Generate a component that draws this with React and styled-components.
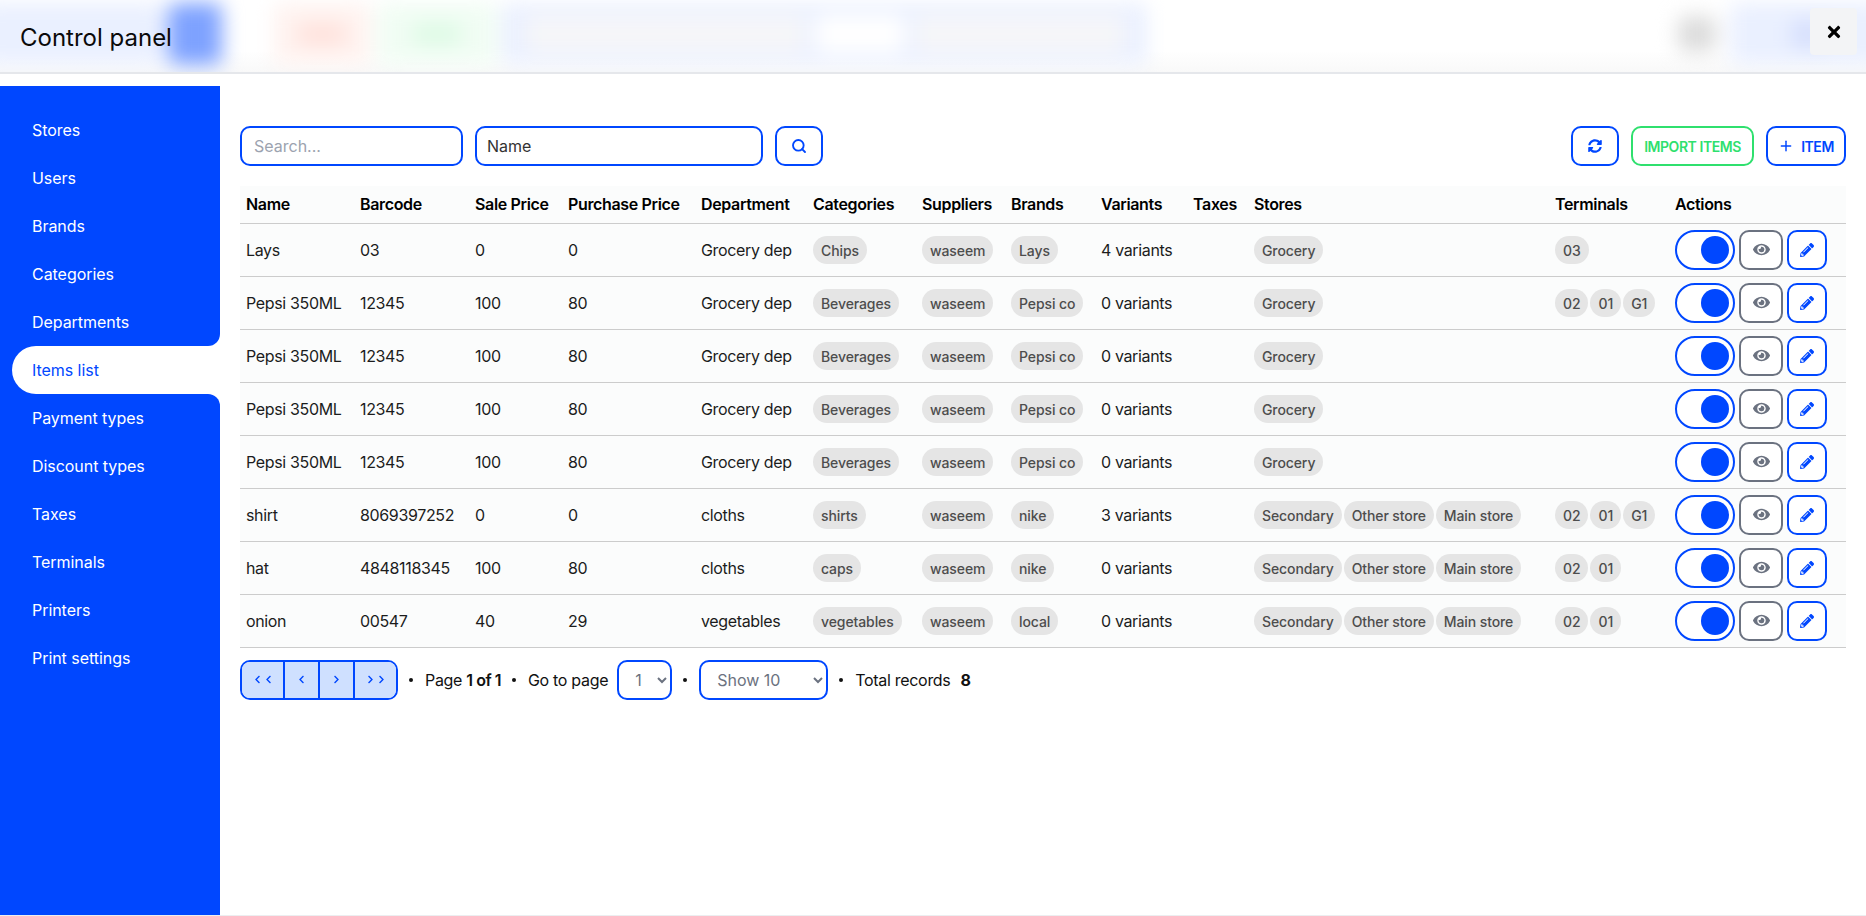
import styled, { createGlobalStyle } from "styled-components"
import { FaEye, FaPencilAlt, FaSyncAlt, FaTimes, FaChevronLeft, FaChevronRight } from "react-icons/fa"
import { Search, Plus } from "lucide-react"

const BLUE = "#0047ff"

const GlobalStyle = createGlobalStyle`
    * { box-sizing: border-box; }
    body {
        margin: 0;
        background: #fff;
        color: #111;
        font-family: Inter, "Noto Sans", sans-serif;
        font-size: 16px;
    }
    input, select, button { font-family: inherit; }
`

const Page = styled.div`
    height: 916px;
    overflow: hidden;
    border-bottom: 1px solid #eceef0;
`

const Header = styled.header`
    position: relative;
    height: 74px;
    border-bottom: 2px solid #e5e7eb;
    background: linear-gradient(#fff 70%, #f9f9f9);
    overflow: hidden;
`

const Backdrop = styled.div`
    position: absolute;
    inset: -10px -20px -6px;
    display: flex;
    justify-content: space-between;
    align-items: center;
    filter: blur(10px);
`

const BlurGroup = styled.div`
    display: flex;
    align-items: center;
    height: 100%;
`

const Blob = styled.div`
    flex: none;
    width: ${p => p.$w}px;
    height: ${p => p.$h || 62}px;
    margin-right: ${p => p.$gap || 0}px;
    background: ${p => p.$color};
    border-radius: 8px;
    display: flex;
    align-items: center;
    justify-content: center;
    gap: 10px;
`

const Title = styled.h1`
    position: relative;
    margin: 0;
    padding: 21px 0 0 20px;
    font-size: 24px;
    line-height: 34px;
    font-weight: 400;
    letter-spacing: 0;
    color: #0a0a0a;
`

const CloseButton = styled.button`
    position: absolute;
    top: 8px;
    right: 9px;
    width: 47px;
    height: 47px;
    border: 0;
    border-radius: 4px;
    background: #f3f4f6;
    color: #000;
    display: flex;
    align-items: center;
    justify-content: center;
    padding: 0;
`

const Layout = styled.div`
    display: flex;
    margin-top: 12px;
    height: 829px;
`

const Sidebar = styled.nav`
    width: 220px;
    flex: none;
    padding: 20px 0;
    background: ${BLUE};
`

const NavRow = styled.div`
    background: ${p => (p.$notch ? "#fff" : "transparent")};
`

const NavItem = styled.div`
    height: 48px;
    display: flex;
    align-items: center;
    font-size: 16px;
    font-weight: 400;
    letter-spacing: -0.05px;
    ${p => p.$active
        ? `margin-left: 12px; padding-left: 20px; background: #fff; color: ${BLUE}; border-radius: 24px 0 0 24px;`
        : `padding-left: 32px; background: ${BLUE}; color: #fff;`}
    ${p => p.$notch === "before" && "border-bottom-right-radius: 12px;"}
    ${p => p.$notch === "after" && "border-top-right-radius: 12px;"}
`

const Main = styled.main`
    flex: 1;
    min-width: 0;
    padding: 40px 20px 0;
`

const Toolbar = styled.div`
    display: flex;
    justify-content: space-between;
    margin-bottom: 20px;
`

const ToolGroup = styled.div`
    display: flex;
    gap: 12px;
`

const SearchInput = styled.input`
    width: 223px;
    height: 40px;
    border: 2px solid ${BLUE};
    border-radius: 10px;
    padding: 0 12px;
    font-size: 16px;
    outline: 0;
    &::placeholder { color: #9ca3af; }
`

const FieldSelect = styled.select`
    width: 288px;
    height: 40px;
    border: 2px solid ${BLUE};
    border-radius: 10px;
    padding: 0 10px;
    font-size: 16px;
    color: #333;
    background: #fff;
    appearance: none;
    outline: 0;
`

const ToolButton = styled.button`
    height: 40px;
    width: ${p => p.$w}px;
    padding: 0;
    border: 2px solid ${p => p.$color || BLUE};
    border-radius: 10px;
    background: #fff;
    color: ${p => p.$color || BLUE};
    font-size: 14px;
    font-weight: 600;
    letter-spacing: -0.45px;
    display: flex;
    align-items: center;
    justify-content: center;
    gap: 7px;
`

const Table = styled.table`
    width: 1606px;
    table-layout: fixed;
    border-collapse: collapse;
    background: #fbfcfc;
`

const HeadCell = styled.th`
    height: 37px;
    padding: 0 0 0 6px;
    text-align: left;
    font-size: 16px;
    font-weight: 600;
    letter-spacing: -0.35px;
    color: #000;
    border-bottom: 1px solid #ccc;
    white-space: nowrap;
`

const Cell = styled.td`
    height: 53px;
    padding: 0 0 0 6px;
    font-size: 16px;
    font-weight: 400;
    letter-spacing: -0.35px;
    color: #1c1c1c;
    border-bottom: 1px solid #ccc;
    white-space: nowrap;
`

const ChipList = styled.div`
    display: flex;
    gap: 2px;
    padding-top: 1px;
`

const Chip = styled.span`
    height: 28px;
    padding: 0 8px;
    border-radius: 14px;
    background: #e5e5e5;
    color: #4d4d4d;
    font-size: 14px;
    font-weight: 500;
    letter-spacing: -0.1px;
    display: inline-flex;
    align-items: center;
`

const Actions = styled.div`
    display: flex;
    gap: 4px;
`

const Toggle = styled.div`
    width: 60px;
    height: 40px;
    padding: 4px;
    border: 2px solid ${BLUE};
    border-radius: 20px;
    background: #fff;
    display: flex;
    justify-content: flex-end;
`

const Knob = styled.span`
    width: 28px;
    height: 28px;
    border-radius: 50%;
    background: ${BLUE};
`

const IconButton = styled.button`
    width: ${p => p.$w}px;
    height: 40px;
    padding: 0;
    border: 2px solid ${p => p.$color};
    border-radius: 10px;
    background: #fff;
    color: ${p => p.$color};
    display: flex;
    align-items: center;
    justify-content: center;
`

const Pagination = styled.div`
    display: flex;
    align-items: center;
    margin-top: 12px;
    font-size: 16px;
    font-weight: 400;
    letter-spacing: -0.3px;
`

const PagerGroup = styled.div`
    display: flex;
    height: 40px;
    border: 2px solid ${BLUE};
    border-radius: 10px;
    overflow: hidden;
`

const PagerButton = styled.button`
    width: ${p => p.$w}px;
    padding: 0;
    border: 0;
    border-right: ${p => (p.$last ? "0" : `2px solid ${BLUE}`)};
    background: #cfe0ff;
    color: ${BLUE};
    display: flex;
    align-items: center;
    justify-content: center;
    gap: 2px;
`

const Dot = styled.span`
    width: 4px;
    height: 4px;
    margin: 0 12px 0 11px;
    border-radius: 50%;
    background: #111;
`

const PageSelect = styled.select`
    width: ${p => p.$w}px;
    height: 40px;
    margin-left: ${p => p.$left || 0}px;
    border: 2px solid ${BLUE};
    border-radius: 10px;
    padding: 0 0 0 12px;
    font-size: 16px;
    color: #6b7280;
    background: #fff;
    outline: 0;
`

const Strong = styled.b`
    font-weight: 600;
    letter-spacing: -0.5px;
`

const Total = styled.b`
    margin-left: 10px;
    font-weight: 700;
`

const menu = ["Stores", "Users", "Brands", "Categories", "Departments", "Items list", "Payment types", "Discount types", "Taxes", "Terminals", "Printers", "Print settings"]
const activeMenu = 5

const columns = [
    ["Name", 114], ["Barcode", 115], ["Sale Price", 93], ["Purchase Price", 133], ["Department", 112], ["Categories", 109],
    ["Suppliers", 89], ["Brands", 90], ["Variants", 92], ["Taxes", 61], ["Stores", 301], ["Terminals", 120], ["Actions", 177],
]

const threeStores = ["Secondary", "Other store", "Main store"]
const pepsi = { name: "Pepsi 350ML", barcode: "12345", sale: "100", cost: "80", dept: "Grocery dep", cat: "Beverages", brand: "Pepsi co", variants: "0 variants", stores: ["Grocery"] }

const items = [
    { name: "Lays", barcode: "03", sale: "0", cost: "0", dept: "Grocery dep", cat: "Chips", brand: "Lays", variants: "4 variants", stores: ["Grocery"], terminals: ["03"] },
    { ...pepsi, terminals: ["02", "01", "G1"] },
    { ...pepsi, terminals: [] },
    { ...pepsi, terminals: [] },
    { ...pepsi, terminals: [] },
    { name: "shirt", barcode: "8069397252", sale: "0", cost: "0", dept: "cloths", cat: "shirts", brand: "nike", variants: "3 variants", stores: threeStores, terminals: ["02", "01", "G1"] },
    { name: "hat", barcode: "4848118345", sale: "100", cost: "80", dept: "cloths", cat: "caps", brand: "nike", variants: "0 variants", stores: threeStores, terminals: ["02", "01"] },
    { name: "onion", barcode: "00547", sale: "40", cost: "29", dept: "vegetables", cat: "vegetables", brand: "local", variants: "0 variants", stores: threeStores, terminals: ["02", "01"] },
]

const Chips = ({ list }) => (
    <ChipList>
        {list.map(text => <Chip key={text}>{text}</Chip>)}
    </ChipList>
)

const App = () => {
    return (
        <Page>
            <GlobalStyle />
            <Header>
                <Backdrop>
                    <BlurGroup>
                        <Blob $w={185} $color="#eaf0ff" $gap={3} />
                        <Blob $w={54} $color="#7ea2ff" $gap={52} />
                        <Blob $w={96} $color="#fff3f0" $gap={7}>
                            <Blob $w={50} $h={20} $color="#ffe0da" />
                        </Blob>
                        <Blob $w={120} $color="#f1fdf4" $gap={5}>
                            <Blob $w={50} $h={20} $color="#dcfae4" />
                        </Blob>
                        <Blob $w={645} $color="#eaf0ff">
                            <Blob $w={280} $h={38} $color="#f6f6f9" />
                            <Blob $w={90} $h={38} $color="#fff" />
                            <Blob $w={210} $h={38} $color="#f6f6f9" />
                        </Blob>
                    </BlurGroup>
                    <BlurGroup>
                        <Blob $w={38} $h={36} $color="#dcdcdc" $gap={14} />
                        <Blob $w={156} $color="#eaf0ff">
                            <Blob $w={34} $h={28} $color="#d6dffd" />
                        </Blob>
                    </BlurGroup>
                </Backdrop>
                <Title>Control panel</Title>
                <CloseButton><FaTimes size={18} /></CloseButton>
            </Header>
            <Layout>
                <Sidebar>
                    {menu.map((label, i) => {
                        const notch = i === activeMenu - 1 ? "before" : i === activeMenu + 1 ? "after" : undefined
                        return (
                            <NavRow key={label} $notch={notch}>
                                <NavItem $active={i === activeMenu} $notch={notch}>{label}</NavItem>
                            </NavRow>
                        )
                    })}
                </Sidebar>
                <Main>
                    <Toolbar>
                        <ToolGroup>
                            <SearchInput placeholder="Search..." />
                            <FieldSelect defaultValue="name">
                                <option value="name">Name</option>
                            </FieldSelect>
                            <ToolButton $w={48}><Search size={16} strokeWidth={2.8} /></ToolButton>
                        </ToolGroup>
                        <ToolGroup>
                            <ToolButton $w={48}><FaSyncAlt size={14} /></ToolButton>
                            <ToolButton $w={123} $color="#2fe06e">IMPORT ITEMS</ToolButton>
                            <ToolButton $w={80}><Plus size={16} strokeWidth={2.2} />ITEM</ToolButton>
                        </ToolGroup>
                    </Toolbar>
                    <Table>
                        <colgroup>
                            {columns.map(([name, width]) => <col key={name} width={width} />)}
                        </colgroup>
                        <thead>
                            <tr>
                                {columns.map(([name]) => <HeadCell key={name}>{name}</HeadCell>)}
                            </tr>
                        </thead>
                        <tbody>
                            {items.map((item, i) => (
                                <tr key={i}>
                                    <Cell>{item.name}</Cell>
                                    <Cell>{item.barcode}</Cell>
                                    <Cell>{item.sale}</Cell>
                                    <Cell>{item.cost}</Cell>
                                    <Cell>{item.dept}</Cell>
                                    <Cell><Chips list={[item.cat]} /></Cell>
                                    <Cell><Chips list={["waseem"]} /></Cell>
                                    <Cell><Chips list={[item.brand]} /></Cell>
                                    <Cell>{item.variants}</Cell>
                                    <Cell />
                                    <Cell><Chips list={item.stores} /></Cell>
                                    <Cell><Chips list={item.terminals} /></Cell>
                                    <Cell>
                                        <Actions>
                                            <Toggle><Knob /></Toggle>
                                            <IconButton $w={44} $color="#6b7280"><FaEye size={17} /></IconButton>
                                            <IconButton $w={40} $color={BLUE}><FaPencilAlt size={14} /></IconButton>
                                        </Actions>
                                    </Cell>
                                </tr>
                            ))}
                        </tbody>
                    </Table>
                    <Pagination>
                        <PagerGroup>
                            <PagerButton $w={43}><FaChevronLeft size={9} /><FaChevronLeft size={9} /></PagerButton>
                            <PagerButton $w={35}><FaChevronLeft size={9} /></PagerButton>
                            <PagerButton $w={35}><FaChevronRight size={9} /></PagerButton>
                            <PagerButton $w={41} $last><FaChevronRight size={9} /><FaChevronRight size={9} /></PagerButton>
                        </PagerGroup>
                        <Dot />
                        <span>Page <Strong>1 of 1</Strong></span>
                        <Dot />
                        <span>Go to page</span>
                        <PageSelect $w={55} $left={9} defaultValue="1"><option>1</option></PageSelect>
                        <Dot />
                        <PageSelect $w={129} defaultValue="10"><option value="10">Show 10</option></PageSelect>
                        <Dot />
                        <span>Total records</span>
                        <Total>8</Total>
                    </Pagination>
                </Main>
            </Layout>
        </Page>
    )
}

export default App
